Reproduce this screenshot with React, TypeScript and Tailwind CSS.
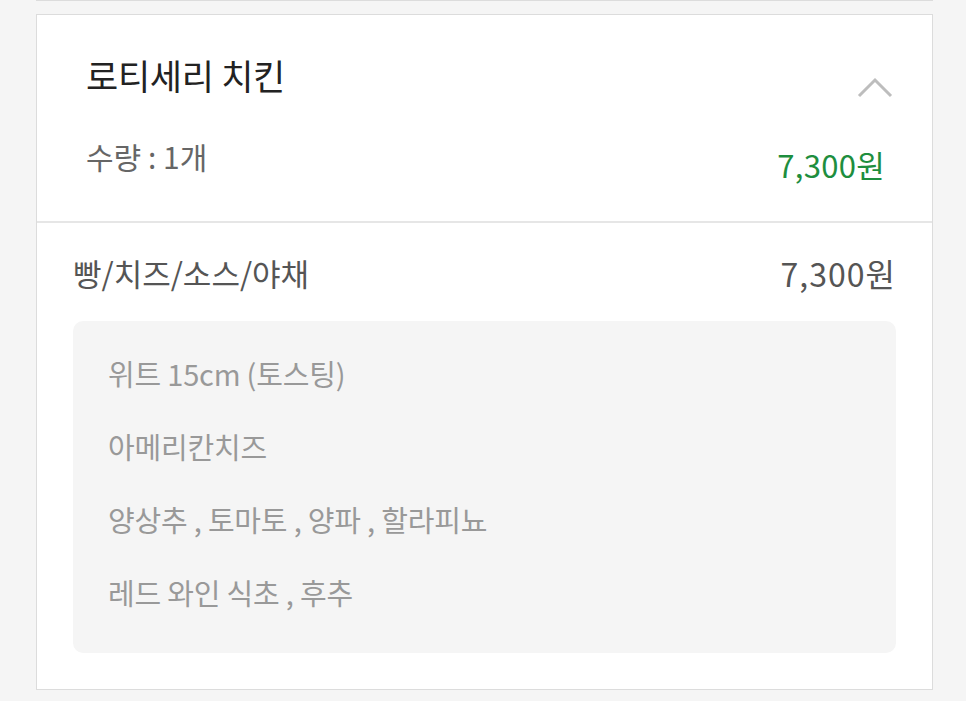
import React from 'react'

const font = { fontFamily: '"Noto Sans CJK KR", "Noto Sans", sans-serif' }

const options = [
    '위트 15cm (토스팅)',
    '아메리칸치즈',
    '양상추 , 토마토 , 양파 , 할라피뇨',
    '레드 와인 식초 , 후추',
]

function ChevronUp() {
    return (
        <svg width="36" height="22" viewBox="0 0 36 22" fill="none">
            <path d="M2 20 L18 4 L34 20" stroke="#bdbdbd" strokeWidth="3" />
        </svg>
    )
}

export default function App() {
    return (
        <div className="min-h-[701px] bg-[#f5f5f5] overflow-hidden" style={font}>
            <div className="ml-[36px] mr-[33px] h-[1px] border-b border-[#dcdcdc]" />
            <div className="ml-[36px] mr-[33px] mt-[13px] bg-white border border-[#dcdcdc]">
                <div className="h-[208px] pl-[49px] pr-[39px] pt-[36px] border-b-2 border-[#e6e6e6]">
                    <div className="flex justify-between">
                        <h1 className="text-[35px] leading-[48px] text-[#222] tracking-[-0.3px]">로티세리 치킨</h1>
                        <div className="pt-[25px]"><ChevronUp /></div>
                    </div>
                    <div className="flex justify-between items-end mt-[36px] pr-[8px]">
                        <p className="text-[30px] leading-[42px] text-[#666]">수량 : 1개</p>
                        <p className="text-[31px] leading-[42px] text-[#1e8e3e] tracking-[0.3px] translate-y-[9px]">7,300원</p>
                    </div>
                </div>
                <div className="px-[36px] pt-[28px] pb-[36px]">
                    <div className="flex justify-between items-center">
                        <h2 className="text-[31px] leading-[44px] text-[#555]">빵/치즈/소스/야채</h2>
                        <p className="text-[32px] leading-[44px] text-[#555] tracking-[1px]">7,300원</p>
                    </div>
                    <div className="mt-[26px] bg-[#f5f5f5] rounded-[10px] px-[35px] pt-[32px] pb-[40px] flex flex-col gap-[32px]">
                        {options.map(o => (
                            <p key={o} className="text-[29px] leading-[41px] text-[#999] tracking-[-0.2px]">{o}</p>
                        ))}
                    </div>
                </div>
            </div>
        </div>
    )
}
